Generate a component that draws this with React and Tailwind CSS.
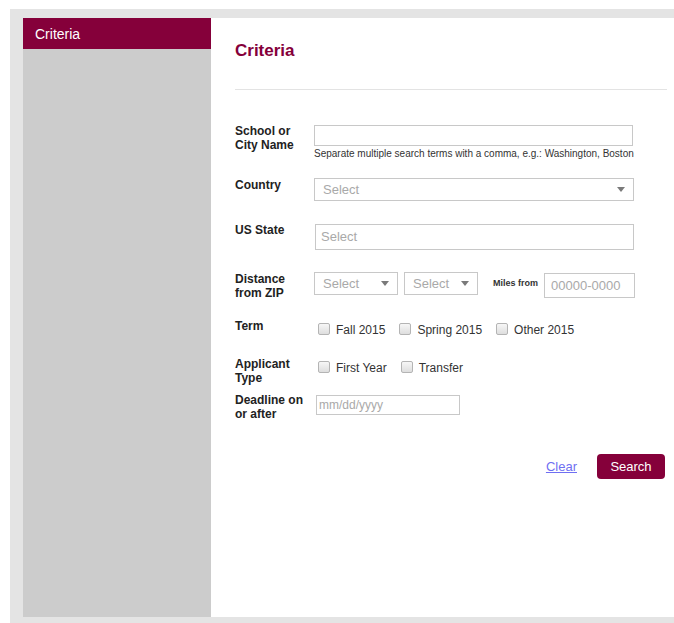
import React from "react";

const font = { fontFamily: '"Liberation Sans", Arial, sans-serif' };

function Arrow() {
  return (
    <svg width="8" height="5" viewBox="0 0 8 5" className="shrink-0">
      <path d="M0 0 L8 0 L4 5 Z" fill="#7a7a7a" />
    </svg>
  );
}

function SelectBox({ className }) {
  return (
    <div
      className={`flex items-center justify-between border border-[#c8c8c8] bg-white pl-[8px] pr-[8px] text-[13px] text-[#a9a9a9] ${className}`}
    >
      <span>Select</span>
      <Arrow />
    </div>
  );
}

function Check({ label, className = "" }) {
  return (
    <label className={`flex items-center ${className}`}>
      <span className="mt-[-3px] h-[12px] w-[12px] rounded-[2px] border border-[#b4b4b4] bg-gradient-to-b from-[#f7f7f7] to-[#dedede]" />
      <span className="ml-[6px] text-[12px] leading-[14px] text-[#333]">{label}</span>
    </label>
  );
}

function Label({ children }) {
  return (
    <div className="w-[79px] shrink-0 text-[12px] font-bold leading-[14px] text-[#222]">
      {children}
    </div>
  );
}

export default function App() {
  return (
    <div className="h-[623px] w-[674px] overflow-hidden bg-white pl-[10px] pt-[9px]" style={font}>
      <div className="flex h-[614px] w-[664px] bg-[#e4e4e4] pb-[6px] pl-[13px] pt-[9px]">
        <aside className="w-[188px] shrink-0 bg-[#cccccc]">
          <div className="h-[31px] bg-[#85003a] pl-[12px] pt-[8px] text-[14px] leading-[16px] text-white">
            Criteria
          </div>
        </aside>

        <main className="min-w-0 flex-1 bg-white pl-[24px] pr-[7px] pt-[23px]">
          <h1 className="text-[17px] font-bold leading-[20px] text-[#85003a]">Criteria</h1>
          <div className="mt-[28px] border-t border-[#e3e3e3]" />

          {/* School or City Name */}
          <div className="mt-[33px] flex items-start">
            <div className="pt-[1px]">
              <Label>
                School or
                <br />
                City Name
              </Label>
            </div>
            <div className="pt-[2px]">
              <div className="h-[21px] w-[319px] border border-[#c8c8c8] bg-white" />
              <div className="mt-[3px] whitespace-nowrap text-[10px] leading-[10px] text-[#333]">
                Separate multiple search terms with a comma, e.g.: Washington, Boston
              </div>
            </div>
          </div>

          {/* Country */}
          <div className="mt-[19px] flex items-start">
            <Label>Country</Label>
            <SelectBox className="h-[23px] w-[320px]" />
          </div>

          {/* US State */}
          <div className="mt-[22px] flex items-start">
            <Label>US State</Label>
            <div className="ml-[1px] mt-[1px] flex h-[26px] w-[319px] items-center border border-[#c8c8c8] bg-white pl-[5px] text-[13px] text-[#a9a9a9]">
              Select
            </div>
          </div>

          {/* Distance from ZIP */}
          <div className="mt-[22px] flex items-start">
            <Label>
              Distance
              <br />
              from ZIP
            </Label>
            <SelectBox className="h-[23px] w-[84px]" />
            <SelectBox className="ml-[6px] h-[23px] w-[74px]" />
            <div className="ml-[15px] mt-[6px] text-[9px] font-bold leading-[10px] text-[#333]">
              Miles from
            </div>
            <div className="ml-[6px] mt-[1px] flex h-[25px] w-[91px] items-center border border-[#c8c8c8] bg-white pl-[6px] text-[13px] text-[#a9a9a9]">
              00000-0000
            </div>
          </div>

          {/* Term */}
          <div className="mt-[19px] flex items-start">
            <Label>Term</Label>
            <div className="ml-[4px] mt-[4px] flex">
              <Check label="Fall 2015" />
              <Check label="Spring 2015" className="ml-[14px]" />
              <Check label="Other 2015" className="ml-[14px]" />
            </div>
          </div>

          {/* Applicant Type */}
          <div className="mt-[20px] flex items-start">
            <Label>
              Applicant
              <br />
              Type
            </Label>
            <div className="ml-[4px] mt-[4px] flex">
              <Check label="First Year" />
              <Check label="Transfer" className="ml-[14px]" />
            </div>
          </div>

          {/* Deadline */}
          <div className="mt-[8px] flex items-start">
            <Label>
              Deadline on
              <br />
              or after
            </Label>
            <div className="ml-[2px] mt-[2px] flex h-[20px] w-[144px] items-center border border-[#c8c8c8] bg-white pl-[2px] text-[12px] text-[#a9a9a9]">
              mm/dd/yyyy
            </div>
          </div>

          <div className="mt-[33px] flex items-center justify-end pr-[2px]">
            <a href="#" className="text-[13px] text-[#6f6ff2] underline">
              Clear
            </a>
            <button className="ml-[20px] h-[25px] w-[68px] rounded-[4px] bg-[#85003a] text-[13px] text-white">
              Search
            </button>
          </div>
        </main>
      </div>
    </div>
  );
}
